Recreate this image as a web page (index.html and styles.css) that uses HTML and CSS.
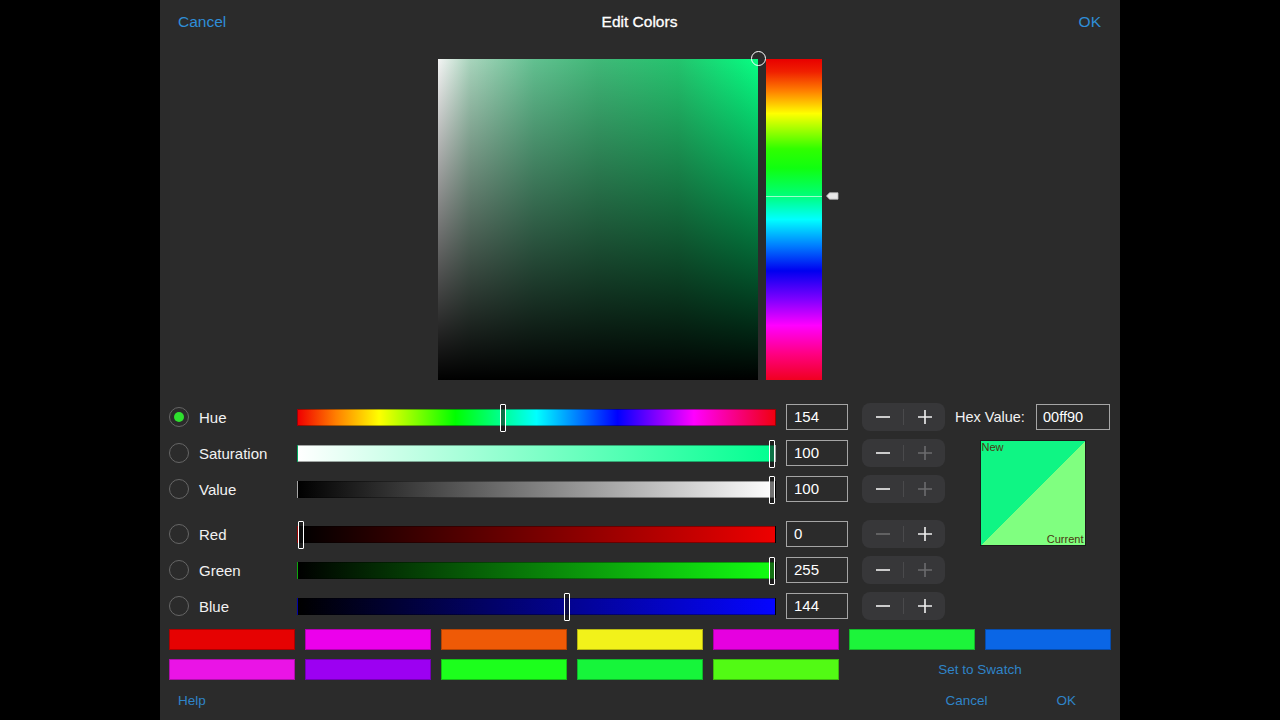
FILE: index.html
```html
<!DOCTYPE html>
<html>
<head>
<meta charset="utf-8">
<link rel="stylesheet" href="styles.css">
</head>
<body>
<div class="panel">
  <header class="topbar">
    <span class="link">Cancel</span>
    <span class="title">Edit Colors</span>
    <span class="link right">OK</span>
  </header>

  <div class="picker">
    <div class="sv">
      <span class="sv-cursor"></span>
    </div>
    <div class="huebar">
      <span class="hue-line"></span>
      <svg class="hue-tag" width="13" height="8" viewBox="0 0 13 8"><path d="M0.5 4 L3.5 0.8 H12 V7.2 H3.5 Z" fill="#e8e8e8" stroke="#bdbdbd" stroke-width="0.8"/></svg>
    </div>
  </div>

  <section class="controls">
    <div class="sliders">
      <div class="row">
        <span class="radio on"></span>
        <span class="label">Hue</span>
        <div class="track t-hue"><span class="thumb" style="left:calc(0.428 * (100% - 6px))"></span></div>
        <div class="num">154</div>
        <div class="stepper"><span class="st"><svg width="14" height="14" viewBox="0 0 14 14"><path d="M0 7H14"/></svg></span><span class="div"></span><span class="st"><svg width="14" height="14" viewBox="0 0 14 14"><path d="M0 7H14M7 0V14"/></svg></span></div>
      </div>
      <div class="row">
        <span class="radio"></span>
        <span class="label">Saturation</span>
        <div class="track t-sat"><span class="thumb" style="left:calc(1 * (100% - 6px))"></span></div>
        <div class="num">100</div>
        <div class="stepper"><span class="st"><svg width="14" height="14" viewBox="0 0 14 14"><path d="M0 7H14"/></svg></span><span class="div"></span><span class="st off"><svg width="14" height="14" viewBox="0 0 14 14"><path d="M0 7H14M7 0V14"/></svg></span></div>
      </div>
      <div class="row">
        <span class="radio"></span>
        <span class="label">Value</span>
        <div class="track t-val"><span class="thumb" style="left:calc(1 * (100% - 6px))"></span></div>
        <div class="num">100</div>
        <div class="stepper"><span class="st"><svg width="14" height="14" viewBox="0 0 14 14"><path d="M0 7H14"/></svg></span><span class="div"></span><span class="st off"><svg width="14" height="14" viewBox="0 0 14 14"><path d="M0 7H14M7 0V14"/></svg></span></div>
      </div>
      <div class="row group">
        <span class="radio"></span>
        <span class="label">Red</span>
        <div class="track t-red"><span class="thumb" style="left:calc(0 * (100% - 6px))"></span></div>
        <div class="num">0</div>
        <div class="stepper"><span class="st off"><svg width="14" height="14" viewBox="0 0 14 14"><path d="M0 7H14"/></svg></span><span class="div"></span><span class="st"><svg width="14" height="14" viewBox="0 0 14 14"><path d="M0 7H14M7 0V14"/></svg></span></div>
      </div>
      <div class="row">
        <span class="radio"></span>
        <span class="label">Green</span>
        <div class="track t-green"><span class="thumb" style="left:calc(1 * (100% - 6px))"></span></div>
        <div class="num">255</div>
        <div class="stepper"><span class="st"><svg width="14" height="14" viewBox="0 0 14 14"><path d="M0 7H14"/></svg></span><span class="div"></span><span class="st off"><svg width="14" height="14" viewBox="0 0 14 14"><path d="M0 7H14M7 0V14"/></svg></span></div>
      </div>
      <div class="row">
        <span class="radio"></span>
        <span class="label">Blue</span>
        <div class="track t-blue"><span class="thumb" style="left:calc(0.565 * (100% - 6px))"></span></div>
        <div class="num">144</div>
        <div class="stepper"><span class="st"><svg width="14" height="14" viewBox="0 0 14 14"><path d="M0 7H14"/></svg></span><span class="div"></span><span class="st"><svg width="14" height="14" viewBox="0 0 14 14"><path d="M0 7H14M7 0V14"/></svg></span></div>
      </div>
    </div>

    <div class="side">
      <div class="hexrow">
        <span class="hexlabel">Hex Value:</span>
        <div class="hexinput">00ff90</div>
      </div>
      <div class="preview">
        <span class="pv-new">New</span>
        <span class="pv-cur">Current</span>
      </div>
    </div>
  </section>

  <section class="swatches">
    <span class="sw" style="background:#e60202"></span>
    <span class="sw" style="background:#ec00ec"></span>
    <span class="sw" style="background:#ef5a06"></span>
    <span class="sw" style="background:#f2f21a"></span>
    <span class="sw" style="background:#e600e0"></span>
    <span class="sw" style="background:#1cf43a"></span>
    <span class="sw" style="background:#0a66e6"></span>
    <span class="sw" style="background:#ea14e6"></span>
    <span class="sw" style="background:#9c00f2"></span>
    <span class="sw" style="background:#1cff1c"></span>
    <span class="sw" style="background:#16f53a"></span>
    <span class="sw" style="background:#52fa14"></span>
    <span class="setsw">Set to Swatch</span>
  </section>

  <footer class="footer">
    <span class="blink">Help</span>
    <div class="fright">
      <span class="blink">Cancel</span>
      <span class="blink">OK</span>
    </div>
  </footer>
</div>
</body>
</html>
```

FILE: styles.css
```css
html, body {
  margin: 0;
  padding: 0;
  background: #000;
  height: 720px;
  overflow: hidden;
  font-family: "Liberation Sans", Arial, sans-serif;
}

.panel {
  width: 960px;
  height: 720px;
  margin: 0 auto;
  background: #2b2b2b;
  color: #fff;
}

.topbar {
  height: 44px;
  display: grid;
  grid-template-columns: 1fr auto 1fr;
  align-items: center;
  padding: 0 19px 0 18px;
  font-size: 15.5px;
}
.topbar .link { color: #2f8ed8; }
.topbar .right { justify-self: end; }
.topbar .title { color: #fff; -webkit-text-stroke: 0.3px #fff; }

.picker {
  display: flex;
  gap: 8px;
  margin: 15px 0 0 278px;
}
.sv {
  position: relative;
  width: 320px;
  height: 321px;
  background:
    linear-gradient(to top, #000 0%, rgba(0,0,0,0.85) 15%, rgba(0,0,0,0.55) 45%, rgba(0,0,0,0.2) 80%, rgba(0,0,0,0) 100%),
    linear-gradient(to right, #f4f4f4 0%, #a8d4bc 10%, #62c090 30%, #40b878 50%, #24c46e 75%, #0cf27e 95%, #08ff84 100%);
}
.sv-cursor {
  position: absolute;
  right: -8px;
  top: -8px;
  width: 13px;
  height: 13px;
  border: 1.5px solid #fff;
  border-radius: 50%;
}
.huebar {
  position: relative;
  width: 56px;
  height: 321px;
  background: linear-gradient(to bottom,
    #e80000 0%, #f02000 4%, #ff8000 10%, #ffff00 17%, #30ff00 28%, #10ff10 34%,
    #00ff70 42%, #00ffff 50%, #0080ff 58%, #0000f0 66%,
    #8000ff 75%, #ff00ff 83%, #ff0080 92%, #f00020 100%);
}
.hue-line {
  position: absolute;
  left: 0;
  right: 0;
  top: 137px;
  height: 1px;
  background: rgba(220,255,230,0.7);
}
.hue-tag {
  position: absolute;
  left: 60px;
  top: 133px;
}

.controls {
  display: flex;
  margin-top: 19px;
  padding-left: 9px;
}
.sliders { width: 776px; }
.row {
  display: flex;
  align-items: center;
  height: 36px;
}
.row.group { margin-top: 9px; }

.radio {
  box-sizing: border-box;
  width: 20px;
  height: 20px;
  border: 1.5px solid #666;
  border-radius: 50%;
  margin-right: 10px;
  display: flex;
  align-items: center;
  justify-content: center;
}
.radio.on::after {
  content: "";
  width: 10px;
  height: 10px;
  border-radius: 50%;
  background: #2ee02e;
}
.label {
  width: 98px;
  font-size: 15px;
  color: #f2f2f2;
}
.track {
  position: relative;
  width: 479px;
  height: 17px;
  margin-right: 10px;
  box-sizing: border-box;
  border: 1px solid rgba(0,0,0,0.35);
}
.t-hue {
  background: linear-gradient(to right,
    #f00000 0%, #ff8000 8%, #ffff00 17%, #00ff00 33%,
    #00ffff 50%, #0000ff 67%, #ff00ff 83%, #f00010 100%);
}
.t-sat { background: linear-gradient(to right, #fff 0%, #00ff90 100%); }
.t-val { background: linear-gradient(to right, #000 0%, #fff 100%); }
.t-red { background: linear-gradient(to right, #000 0%, #ee0000 100%); }
.t-green { background: linear-gradient(to right, #000 0%, #12ff12 100%); }
.t-blue { background: linear-gradient(to right, #000 0%, #0505ff 100%); }

.thumb {
  position: absolute;
  top: -6px;
  box-sizing: border-box;
  width: 6px;
  height: 28px;
  border: 1.5px solid #fff;
  border-radius: 1px;
  background: rgba(20,20,20,0.6);
}

.num {
  box-sizing: border-box;
  width: 62px;
  height: 26px;
  border: 1px solid #a5a5a5;
  padding-left: 7px;
  font-size: 15px;
  line-height: 24px;
  color: #fff;
  margin-right: 14px;
}
.stepper {
  display: flex;
  align-items: center;
  width: 83px;
  height: 28px;
  background: #373739;
  border-radius: 8px;
}
.stepper .st {
  flex: 1;
  display: flex;
  align-items: center;
  justify-content: center;
}
.stepper svg path {
  stroke: #f0f0f0;
  stroke-width: 1.6;
  fill: none;
}
.stepper .st.off svg path { stroke: #6c6c6e; }
.stepper .div {
  width: 1px;
  height: 16px;
  background: #4a4a4c;
}

.side {
  width: 155px;
  margin-left: 10px;
}
.hexrow {
  display: flex;
  align-items: center;
  justify-content: space-between;
  height: 36px;
}
.hexlabel {
  font-size: 14.5px;
  color: #f2f2f2;
}
.hexinput {
  box-sizing: border-box;
  width: 74px;
  height: 26px;
  border: 1px solid #a5a5a5;
  padding-left: 6px;
  font-size: 14.5px;
  line-height: 24px;
}
.preview {
  position: relative;
  box-sizing: border-box;
  width: 106px;
  height: 106px;
  margin: 5px auto 0;
  border: 1px solid #1a1a1a;
  background: linear-gradient(to bottom right, #0ff584 50%, #80ff80 50%);
}
.pv-new {
  position: absolute;
  left: 1px;
  top: 0;
  font-size: 11px;
  color: #4a3810;
}
.pv-cur {
  position: absolute;
  right: 1px;
  bottom: 0;
  font-size: 11px;
  color: #4a3810;
}

.swatches {
  display: grid;
  grid-template-columns: repeat(7, 126px);
  grid-auto-rows: 21px;
  column-gap: 10px;
  row-gap: 9px;
  margin-top: 5px;
  padding-left: 9px;
}
.sw {
  box-sizing: border-box;
  border: 1px solid rgba(0,0,0,0.25);
}
.setsw {
  grid-column: 6 / 8;
  display: flex;
  align-items: center;
  justify-content: center;
  font-size: 13.5px;
  color: #2f84c8;
}

.footer {
  display: flex;
  align-items: center;
  justify-content: space-between;
  height: 40px;
  padding: 0 44px 0 18px;
}
.fright {
  display: flex;
  gap: 69px;
}
.blink {
  font-size: 13.5px;
  color: #2f84c8;
}
```
